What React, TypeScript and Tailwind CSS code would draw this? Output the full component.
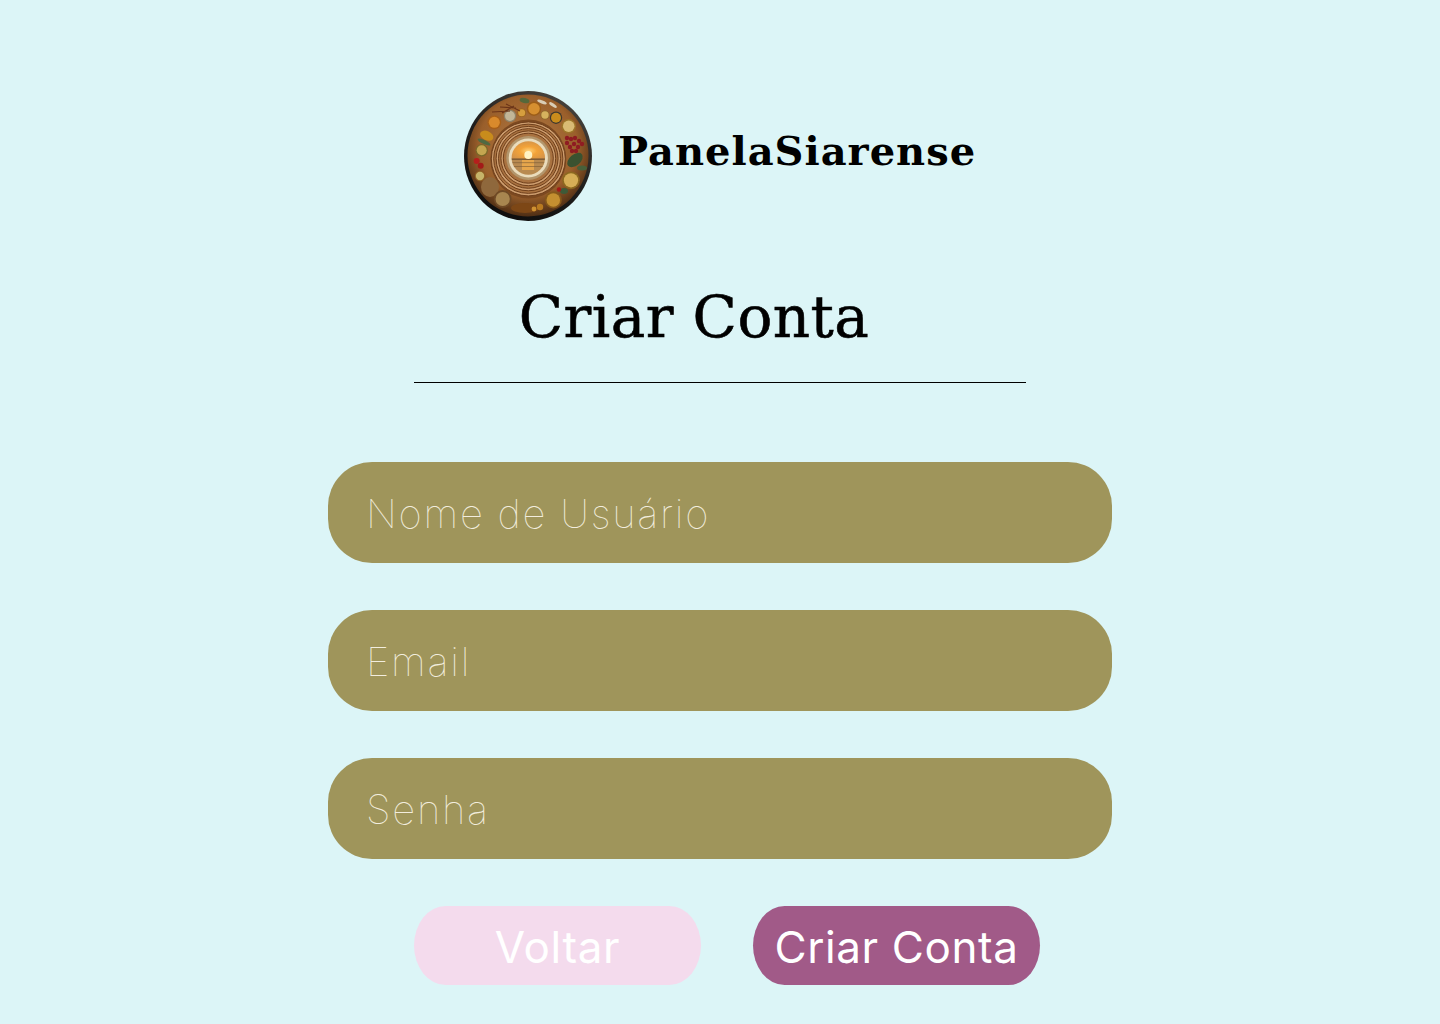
import React from "react";

const Logo = () => {
  const fruits: [number, number, number, string, string][] = [
    [30.3, 31.3, 6.9, "#a85f18", "#d98a2c"],
    [46, 25, 6.2, "#8f8268", "#c2b698"],
    [57.7, 21.7, 4.4, "#9c651c", "#d69e3e"],
    [70, 17.7, 7.2, "#9c5d18", "#d68f30"],
    [81, 24, 4.6, "#8f682c", "#d6b25e"],
    [92, 26.7, 6.2, "#3c382f", "#c98c1c"],
    [104.7, 35.3, 7.2, "#9c7429", "#d9bb74"],
    [17.7, 59.3, 6.2, "#796828", "#c4a650"],
    [16, 85, 5.2, "#8f6024", "#c6b46a"],
    [38.7, 108, 8.9, "#6f4a26", "#a88650"],
    [89.3, 109, 8.5, "#86581a", "#c48f30"],
    [107, 89.3, 8.9, "#8c6820", "#d6ae56"],
  ];
  const berries: [number, number][] = [
    [103, 52], [107, 48], [111, 47], [115, 50], [118, 53], [106, 56], [110, 53], [114, 56], [108, 60], [112, 60], [103, 47],
  ];
  const rings = [37, 34.6, 32.2, 29.8, 27.4, 25];
  return (
    <svg viewBox="0 0 128 130" className="w-[128px] h-[130px] shrink-0">
      <defs>
        <radialGradient id="wood" cx="50%" cy="42%" r="58%">
          <stop offset="0%" stopColor="#b17a45" />
          <stop offset="70%" stopColor="#9a5f2b" />
          <stop offset="100%" stopColor="#4f2e14" />
        </radialGradient>
        <linearGradient id="rim" x1="0.8" y1="0" x2="0.2" y2="1">
          <stop offset="0%" stopColor="#4a453f" />
          <stop offset="50%" stopColor="#201e1c" />
          <stop offset="100%" stopColor="#0c0b0b" />
        </linearGradient>
        <radialGradient id="sun" cx="50%" cy="55%" r="60%">
          <stop offset="0%" stopColor="#ffd27a" />
          <stop offset="40%" stopColor="#f3a338" />
          <stop offset="100%" stopColor="#d1914a" />
        </radialGradient>
        <clipPath id="sunclip"><circle cx="64.3" cy="67" r="16.7" /></clipPath>
      </defs>
      <ellipse cx="64" cy="65" rx="64" ry="65" fill="url(#rim)" />
      <ellipse cx="64" cy="64.5" rx="60.5" ry="61" fill="url(#wood)" />
      <ellipse cx="64.3" cy="68" rx="38" ry="39.5" fill="#7c4920" />
      {rings.map((r, i) => (
        <circle key={r} cx="64.3" cy={67 + (r - 22) * 0.06} r={r} fill={i % 2 ? "#a97240" : "#cd9d6e"} stroke="#6f3f1b" strokeWidth="1" />
      ))}
      <circle cx="64.3" cy="67" r="22" fill="#b3966c" />
      <circle cx="64.3" cy="67" r="19.6" fill="#eadcbc" />
      <g clipPath="url(#sunclip)">
        <rect x="47" y="50" width="35" height="18" fill="url(#sun)" />
        <rect x="47" y="68" width="35" height="16" fill="#b88a50" />
        <rect x="47" y="67.6" width="35" height="1" fill="#5a4228" />
        <rect x="58" y="69" width="12" height="10" fill="#e6a64c" />
        <rect x="47" y="71.5" width="35" height="0.6" fill="#7b5a33" />
        <rect x="47" y="75" width="35" height="0.6" fill="#7b5a33" />
      </g>
      <circle cx="64.3" cy="64" r="4" fill="#fff3c4" />
      <g>
        <ellipse cx="61" cy="117" rx="14" ry="5" fill="#7d4716" />
        <circle cx="76" cy="116" r="3.2" fill="#b87a20" />
        <circle cx="70" cy="118" r="2.4" fill="#cf9232" />
        <ellipse cx="26" cy="96" rx="9" ry="10" fill="#8f683c" />
        <ellipse cx="22.7" cy="44.7" rx="7" ry="4.6" fill="#c98c1c" transform="rotate(25 22.7 44.7)" />
      </g>
      {fruits.map(([x, y, r, a, b], i) => (
        <g key={i}>
          <circle cx={x} cy={y} r={r} fill={a} />
          <circle cx={x} cy={y} r={r * 0.8} fill={b} />
        </g>
      ))}
      <ellipse cx="111" cy="69" rx="9" ry="5.5" fill="#3a5230" transform="rotate(-40 111 69)" />
      <ellipse cx="118" cy="77" rx="5" ry="2.5" fill="#48603a" />
      <ellipse cx="100" cy="100" rx="4" ry="3" fill="#3e5a38" />
      <ellipse cx="60.5" cy="9.5" rx="5" ry="2.5" fill="#55683a" transform="rotate(15 60.5 9.5)" />
      <ellipse cx="20" cy="51" rx="7" ry="2" fill="#4f6a42" transform="rotate(25 20 51)" />
      <ellipse cx="78" cy="11" rx="5" ry="1.6" fill="#d9cdb6" transform="rotate(20 78 11)" />
      <ellipse cx="89" cy="14" rx="4.5" ry="1.6" fill="#d9cdb6" transform="rotate(35 89 14)" />
      <path d="M36 16 L52 17 M42 13 L56 20 M28 21 L46 20 M38 22 L50 15" stroke="#6a3318" strokeWidth="1.1" />
      <circle cx="12.7" cy="70" r="3" fill="#b51f1c" />
      <circle cx="16.7" cy="74.7" r="3" fill="#a31a18" />
      <circle cx="95" cy="98.5" r="2.2" fill="#a31a18" />
      {berries.map(([x, y], i) => <circle key={i} cx={x} cy={y} r="2.2" fill="#8f1c22" />)}
    </svg>
  );
};

const fields = ["Nome de Usuário", "Email", "Senha"];

export default function App() {
  return (
    <div className="min-h-[1024px] bg-[#dcf5f7] flex flex-col items-center pt-[91px]">
      <header className="flex items-start gap-[26px] w-[512px]">
        <Logo />
        <span className="mt-[40px] font-['DejaVu_Serif',serif] font-bold text-[40px] tracking-[1px] leading-none text-black">PanelaSiarense</span>
      </header>
      <h1 className="mt-[62px] w-[612px] h-[100px] border-b border-black pr-[52px] text-center font-['DejaVu_Serif',serif] text-[58px] tracking-[0.4px] leading-[68px] [-webkit-text-stroke:0.6px_black] text-black">Criar Conta</h1>
      <form className="mt-[79px] flex flex-col gap-[47px]">
        {fields.map((f) => (
          <input
            key={f}
            placeholder={f}
            className="w-[784px] h-[101px] rounded-[44px] bg-[#9f955b] pl-[38px] pt-[2px] font-['Inter',sans-serif] font-[100] text-[40px] tracking-[1.75px] text-[#f2edde] placeholder:text-[#f2edde] outline-none"
          />
        ))}
      </form>
      <div className="mt-[47px] ml-[14px] flex gap-[52px]">
        <button className="w-[287px] h-[79px] pt-[3px] rounded-[32px/40px] bg-[#f4dbed] font-['Inter',sans-serif] font-normal text-[44px] tracking-[0.6px] text-white">Voltar</button>
        <button className="w-[287px] h-[79px] pt-[3px] rounded-[32px/40px] bg-[#a15a88] font-['Inter',sans-serif] font-normal text-[44px] tracking-[0.6px] text-white">Criar Conta</button>
      </div>
    </div>
  );
}
